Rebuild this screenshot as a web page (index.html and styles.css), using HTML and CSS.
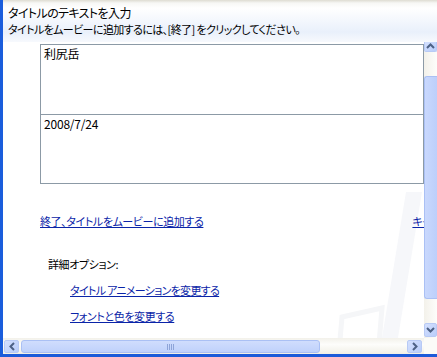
FILE: index.html
```html
<!DOCTYPE html>
<html lang="ja">
<head>
    <meta charset="UTF-8">
    <title>タイトルのテキストを入力</title>
    <link rel="stylesheet" href="styles.css">
</head>
<body>
<div class="window">
    <div class="pane">
        <div class="header">
            <h1 class="title">タイトルのテキストを入力</h1>
            <p class="hint">タイトルをムービーに追加するには、[終了] をクリックしてください。</p>
        </div>
        <div class="content">
            <!-- 背景の透かし -->
            <svg class="mark" width="140" height="170" viewBox="0 0 140 170">
                <path d="M122 0 L138 0 L110 170 L94 170 Z" fill="#f6f7fa"/>
                <path d="M58 125 L98 116 L95 152 L55 160 Z" fill="none" stroke="#f5f6f8" stroke-width="5"/>
            </svg>
            <div class="fields">
                <div class="field first">利尻岳</div>
                <div class="field">2008/7/24</div>
            </div>
            <div class="actions">
                <a href="javascript:;">終了、タイトルをムービーに追加する</a>
                <a href="javascript:;" class="cancel">キャンセル</a>
            </div>
            <p class="more">詳細オプション:</p>
            <ul class="options">
                <li><a href="javascript:;">タイトル アニメーションを変更する</a></li>
                <li><a href="javascript:;">フォントと色を変更する</a></li>
            </ul>
        </div>
        <div class="vscroll">
            <span class="btn up"><svg width="9" height="6" viewBox="0 0 9 6"><path d="M1 5 L4.5 1.5 L8 5" fill="none" stroke="#4d6185" stroke-width="2"/></svg></span>
            <span class="track"></span>
            <span class="thumb"></span>
            <span class="track"></span>
            <span class="btn down"><svg width="9" height="6" viewBox="0 0 9 6"><path d="M1 1 L4.5 4.5 L8 1" fill="none" stroke="#4d6185" stroke-width="2"/></svg></span>
        </div>
        <div class="hscroll">
            <span class="btn"><svg width="6" height="9" viewBox="0 0 6 9"><path d="M5 1 L1.5 4.5 L5 8" fill="none" stroke="#4d6185" stroke-width="2"/></svg></span>
            <span class="thumb"><i></i></span>
            <span class="track"></span>
            <span class="btn"><svg width="6" height="9" viewBox="0 0 6 9"><path d="M1 1 L4.5 4.5 L1 8" fill="none" stroke="#4d6185" stroke-width="2"/></svg></span>
        </div>
        <div class="corner"></div>
    </div>
</div>
</body>
</html>
```

FILE: styles.css
```css
*{ margin: 0; padding: 0; list-style: none; box-sizing: border-box; }
a{ color: #0a24a8; text-decoration: underline; }
body{ background: #fff; color: #000; font: 11px/14px "Noto Sans CJK JP", sans-serif; font-feature-settings: "palt"; letter-spacing: -0.4px; }

.window{ width: 437px; height: 357px; overflow: hidden; border-left: 3px solid #1a5ddc; border-bottom: 3px solid #1c5bd9; }
.pane{ display: grid; grid-template-columns: 421px 13px; grid-template-rows: 42px 296px 16px; }

.header{ grid-column: 1 / 3; padding: 5px 0 0 5px; background: linear-gradient(#dedcd2 0, #f7f7f5 3px, #ffffff 8px, #e9f0fb 32px, #f7f9fd 42px); }
.header .title{ font-size: 12px; line-height: 15px; font-weight: normal; letter-spacing: -0.6px; }
.header .hint{ margin-top: 3px; font-size: 11px; line-height: 13px; letter-spacing: -0.6px; }

.content{ position: relative; overflow: hidden; padding: 2px 0 0 37px; }
.content .mark{ position: absolute; right: 0; top: 150px; }
.fields{ position: relative; width: 384px; font-size: 12px; letter-spacing: -0.2px; }
.field{ height: 69px; padding: 2px 3px; border: 1px solid #8c9aa6; border-top: 0; background: #fff; }
.field.first{ height: 71px; border-top: 1px solid #8c9aa6; }

.actions{ position: relative; display: flex; gap: 209px; margin-top: 30px; white-space: nowrap; }
.more{ position: relative; margin: 29px 0 0 8px; }
.options{ position: relative; margin-left: 30px; }
.options li{ margin-top: 12px; }
.options li:first-child{ letter-spacing: -0.7px; }

.btn{ display: flex; align-items: center; justify-content: center; border: 1px solid #b8caf5; border-radius: 2px; background: linear-gradient(135deg, #d4e0fe, #b9cdfa); }
.vscroll{ display: flex; flex-direction: column; padding-bottom: 1px; background: linear-gradient(to right, #f3f1ea, #fdfdfb); }
.vscroll .btn{ height: 14px; }
.vscroll .btn.up{ height: 10px; border-top: 0; border-radius: 0 0 2px 2px; }
.vscroll .track{ height: 25px; }
.vscroll .track + .track{ height: 17px; }
.vscroll .thumb{ height: 229px; border: 1px solid #aac0f4; border-right: 0; border-radius: 3px 0 0 3px; background: linear-gradient(to right, #c9d8fd, #bccffb); }

.hscroll{ display: flex; gap: 2px; padding: 2px 2px 1px 1px; background: linear-gradient(#f3f1ea, #fdfdfb 40%, #f1efe6); }
.hscroll .btn{ width: 15px; }
.hscroll .thumb{ display: flex; align-items: center; justify-content: center; width: 299px; border: 1px solid #aac0f4; border-radius: 3px; background: linear-gradient(#d0ddfd, #bfd1fb); }
.hscroll .thumb i{ width: 7px; height: 6px; background: repeating-linear-gradient(to right, #8ea4d8 0 1px, transparent 1px 2px); }
.hscroll .track{ flex: 1; }
.corner{ background: #fbfbf8; }
```
